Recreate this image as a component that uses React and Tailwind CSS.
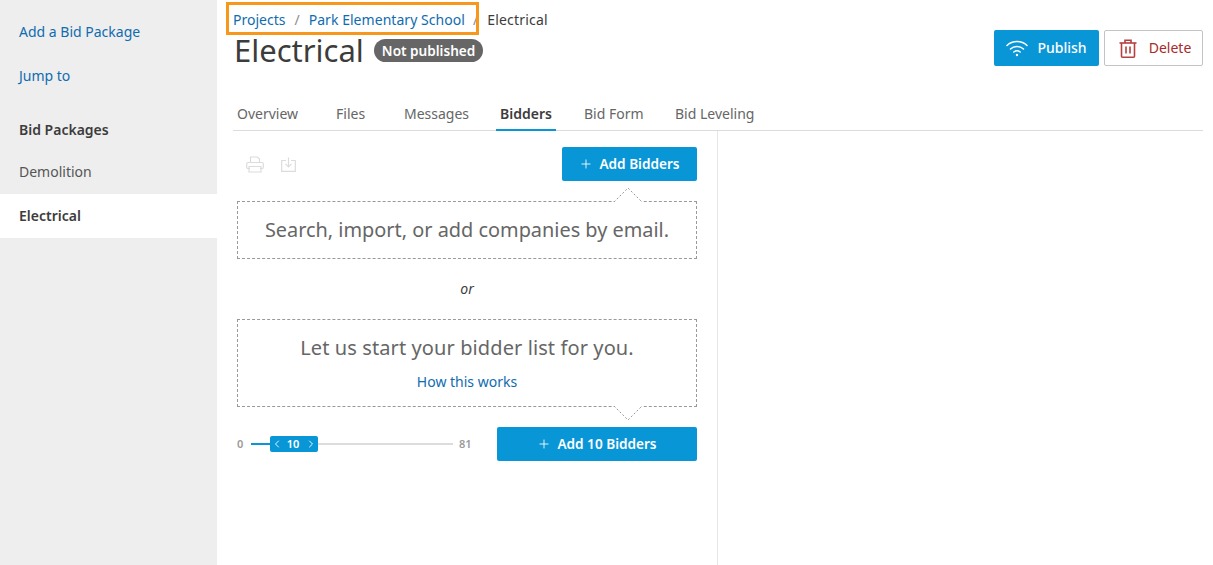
import { ChevronLeft, ChevronRight, Plus } from "lucide-react";

const font = "font-['Noto_Sans',sans-serif]";

function SideItem({ children, className = "" }) {
  return <div className={`flex h-[44px] items-center pb-[2px] pl-[19px] text-[14px] ${className}`}>{children}</div>;
}

function WifiIcon() {
  return (
    <svg width="22" height="18" viewBox="0 0 22 18" fill="none" stroke="white" strokeWidth="1.5" strokeLinecap="round">
      <path d="M1 6.5C6.5 1.2 15.5 1.2 21 6.5" />
      <path d="M4.5 10C8 6.8 14 6.8 17.5 10" />
      <path d="M7.8 13C9.6 11.6 12.4 11.6 14.2 13" />
      <circle cx="11" cy="16" r="1.2" fill="white" stroke="none" />
    </svg>
  );
}

function TrashIcon() {
  return (
    <svg width="18" height="19" viewBox="0 0 18 19" fill="none" stroke="#b5403f" strokeWidth="1.6">
      <path d="M0.5 4H17.5" />
      <path d="M6 4V1.2H12V4" />
      <path d="M2.5 4V17.2C2.5 17.8 3 18.2 3.5 18.2H14.5C15 18.2 15.5 17.8 15.5 17.2V4" />
      <path d="M7 7.5V14.5M11 7.5V14.5" />
    </svg>
  );
}

function PrintIcon() {
  return (
    <svg width="18" height="17" viewBox="0 0 18 17" fill="none" stroke="#dcdcdc" strokeWidth="1.2">
      <path d="M4.5 6.5V1H11.5L13.5 3V6.5" />
      <path d="M4 12.5H2C1.2 12.5 0.7 12 0.7 11.2V7.8C0.7 7 1.2 6.5 2 6.5H16C16.8 6.5 17.3 7 17.3 7.8V11.2C17.3 12 16.8 12.5 16 12.5H14" />
      <path d="M3 10.5H15V16H3Z" />
    </svg>
  );
}

function ExportIcon() {
  return (
    <svg width="15" height="15" viewBox="0 0 15 15" fill="none" stroke="#dcdcdc" strokeWidth="1.2">
      <path d="M5 3.5H0.7V14.3H14.3V3.5H10" />
      <path d="M7.5 0.5V9.5M4.5 6.8L7.5 9.8L10.5 6.8" />
    </svg>
  );
}

// small dashed notch that sits on the top or bottom edge of a dashed box
function Notch({ flip }) {
  return (
    <svg
      width="30"
      height="16"
      viewBox="0 0 30 16"
      className={`absolute right-[53px] ${flip ? "bottom-[-15px]" : "top-[-15px]"}`}
      style={flip ? { transform: "scaleY(-1)" } : undefined}
    >
      <path d="M1 15L15 1L29 15Z" fill="white" stroke="none" />
      <path d="M1 15L15 1L29 15" fill="none" stroke="#999999" strokeWidth="1" strokeDasharray="2 2" />
    </svg>
  );
}

function BlueButton({ children, className = "" }) {
  return (
    <button className={`flex h-[34px] items-center justify-center gap-[6px] rounded-[2px] bg-[#0996d7] text-[13.6px] font-semibold text-white ${className}`}>
      <Plus size={14} strokeWidth={1.5} />
      <span>{children}</span>
    </button>
  );
}

export default function App() {
  const tabs = [
    ["Overview", "w-[99px]"],
    ["Files", "w-[68px]"],
    ["Messages", "w-[96px]"],
    ["Bidders", "w-[84px]"],
    ["Bid Form", "w-[91px]"],
    ["Bid Leveling", "w-[90px]"],
  ];

  return (
    <div className={`relative flex h-[565px] w-full overflow-hidden bg-white text-[#3c3c3c] ${font}`}>
      <aside className="w-[217px] shrink-0 bg-[#eeeeee] pt-[10px]">
        <SideItem className="text-[#0f6cb0]">Add a Bid Package</SideItem>
        <SideItem className="text-[#0f6cb0]">Jump to</SideItem>
        <SideItem className="mt-[10px] font-semibold text-[#3c3c3c]">Bid Packages</SideItem>
        <SideItem className="-mt-[2px] text-[#555555]">Demolition</SideItem>
        <SideItem className="bg-white font-semibold text-[#3c3c3c]">Electrical</SideItem>
      </aside>

      <main className="min-w-0 flex-1 pl-[16px] pr-[10px]">
        <div className="flex h-[40px] items-center text-[14px] leading-none">
          <span className="text-[#0f6cb0]">Projects</span>
          <span className="ml-[9px] text-[#8c8c8c]">/</span>
          <span className="ml-[9px] tracking-[0.05px] text-[#0f6cb0]">Park Elementary School</span>
          <span className="ml-[8px] text-[#8c8c8c]">/</span>
          <span className="ml-[9px] tracking-[0.2px] text-[#3c3c3c]">Electrical</span>
        </div>

        <div className="flex h-[20px] items-start justify-between pl-px">
          <div className="-mt-[10px] flex items-center">
            <h1 className="text-[31px] font-normal leading-[40px] text-[#3c3c3c]">Electrical</h1>
            <span className="ml-[10px] rounded-full bg-[#666666] px-[8px] text-[13.6px] font-semibold leading-[23px] text-white">Not published</span>
          </div>
          <div className="-mt-[10px] flex gap-[5px]">
            <button className="flex h-[36px] w-[105px] items-center justify-center gap-[9px] rounded-[2px] bg-[#0996d7] text-[14px] font-medium text-white">
              <WifiIcon />
              <span className="pb-[1px]">Publish</span>
            </button>
            <button className="flex h-[36px] w-[99px] items-center justify-center gap-[12px] rounded-[2px] border border-[#c4c4c4] bg-white pl-[3px] text-[14px] text-[#a82a2a]">
              <TrashIcon />
              <span className="pb-[1px]">Delete</span>
            </button>
          </div>
        </div>

        <nav className="mt-[35px] flex h-[36px] border-b border-[#dcdcdc] pl-[4px] text-[14px]">
          {tabs.map(([label, w]) => (
            <div key={label} className={`${w} shrink-0 pt-[8px] ${label === "Bidders" ? "font-semibold text-[#3c3c3c]" : "text-[#666666]"}`}>
              {label === "Bidders" ? (
                <span className="-ml-[4px] inline-block h-[28px] border-b-2 border-[#0996d7] px-[4px]">{label}</span>
              ) : (
                label
              )}
            </div>
          ))}
        </nav>

        <section className="h-[434px] w-[485px] border-r border-[#e6e6e6] pl-[4px] pr-[20px] pt-[16px]">
          <div className="flex h-[34px] items-center justify-between">
            <div className="flex items-center gap-[17px] pl-[9px]">
              <PrintIcon />
              <ExportIcon />
            </div>
            <BlueButton className="w-[135px]">Add Bidders</BlueButton>
          </div>

          <div className="relative mt-[20px] flex h-[58px] items-center justify-center border border-dashed border-[#999999] text-[19.9px] text-[#666666]">
            <Notch />
            Search, import, or add companies by email.
          </div>

          <p className="mt-[20px] text-center text-[14px] italic leading-[20px] text-[#3c3c3c]">or</p>

          <div className="relative mt-[20px] flex h-[88px] flex-col items-center border border-dashed border-[#999999] pt-[14px]">
            <span className="text-[20px] leading-[28px] tracking-[0.1px] text-[#666666]">Let us start your bidder list for you.</span>
            <span className="mt-[10px] text-[14px] leading-[20px] text-[#0f6cb0]">How this works</span>
            <Notch flip />
          </div>

          <div className="mt-[20px] flex h-[34px] items-center justify-between">
            <div className="flex items-center text-[11px] font-semibold text-[#9a9a9a]">
              <span className="w-[14px]">0</span>
              <span className="h-[2px] w-[19px] bg-[#0996d7]" />
              <span className="flex h-[16px] w-[48px] items-center justify-between rounded-[2px] bg-[#0996d7] px-[1px] text-white">
                <ChevronLeft size={12} strokeWidth={1.8} />
                <span className="-ml-[2px]">10</span>
                <ChevronRight size={12} strokeWidth={1.8} />
              </span>
              <span className="h-[2px] w-[135px] bg-[#dcdcdc]" />
              <span className="ml-[6px]">81</span>
            </div>
            <BlueButton className="w-[200px]">Add 10 Bidders</BlueButton>
          </div>
        </section>
      </main>

      {/* orange annotation around the breadcrumb */}
      <div className="absolute left-[226px] top-[2px] h-[33px] w-[253px] border-[3px] border-[#f7981d]" />
    </div>
  );
}
